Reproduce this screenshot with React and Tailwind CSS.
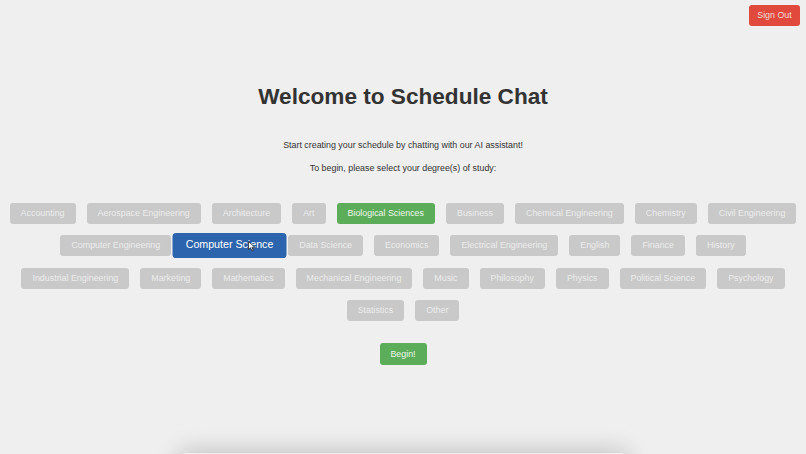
import { useState } from "react";

const rows = [
  ["Accounting", "Aerospace Engineering", "Architecture", "Art", "Biological Sciences", "Business", "Chemical Engineering", "Chemistry", "Civil Engineering"],
  ["Computer Engineering", "Computer Science", "Data Science", "Economics", "Electrical Engineering", "English", "Finance", "History"],
  ["Industrial Engineering", "Marketing", "Mathematics", "Mechanical Engineering", "Music", "Philosophy", "Physics", "Political Science", "Psychology"],
  ["Statistics", "Other"],
];

export default function App() {
  const [selected, setSelected] = useState(["Biological Sciences"]);
  const hovered = "Computer Science";

  const toggle = (d) => {
    setSelected((s) => (s.includes(d) ? s.filter((x) => x !== d) : [...s, d]));
  };

  return (
    <div
      className="relative min-h-screen overflow-hidden bg-[#efefef] text-[#333]"
      style={{ fontFamily: '"Liberation Sans", Arial, sans-serif' }}
    >
      {/* Header */}
      <div className="flex justify-end pt-[5px] pr-[6px]">
        <button className="flex h-[21px] w-[51px] items-center justify-center rounded-[3px] bg-[#e0493b] text-[8.9px] leading-none text-[#f3dcd9]">
          Sign Out
        </button>
      </div>

      <div className="flex flex-col items-center">
        <h1 className="mt-[59.5px] text-[22.6px] font-bold leading-none text-[#333]">
          Welcome to Schedule Chat
        </h1>
        <p className="mt-[32.5px] text-[8.9px] leading-[9px] text-[#333]">
          Start creating your schedule by chatting with our AI assistant!
        </p>
        <p className="mt-[14px] text-[8.9px] leading-[9px] text-[#333]">
          To begin, please select your degree(s) of study:
        </p>

        {/* Degrees */}
        <div className="mt-[30.5px] flex flex-col items-center gap-[11.3px]">
          {rows.map((row, i) => (
            <div key={i} className="flex justify-center gap-[11px]">
              {row.map((d) => {
                const isSel = selected.includes(d);
                const isHover = d === hovered;
                return (
                  <button
                    key={d}
                    onClick={() => toggle(d)}
                    className={
                      "flex h-[21px] items-center justify-center whitespace-nowrap rounded-[3px] px-[11px] text-[8.9px] leading-none " +
                      (isHover
                        ? "relative z-10 scale-[1.2] bg-[#2c64ad] text-white"
                        : isSel
                        ? "bg-[#5cad5a] text-[#eef6ec]"
                        : "bg-[#c9c9c9] text-[#ececec]")
                    }
                  >
                    {d}
                  </button>
                );
              })}
            </div>
          ))}
        </div>

        <button className="mt-[22.3px] flex h-[22px] w-[47px] items-center justify-center rounded-[3px] bg-[#5cad5a] text-[8.9px] leading-none text-[#eef6ec]">
          Begin!
        </button>

        {/* Chat box (below fold) */}
        <div className="mt-[88px] h-[200px] w-[450px] rounded-[8px] bg-[#efefef] shadow-[0_-2px_24px_rgba(0,0,0,0.2)]" />
      </div>

      {/* Mouse cursor */}
      <svg
        className="pointer-events-none absolute left-[248px] top-[241px] z-20"
        width="8"
        height="11"
        viewBox="0 0 8 11"
      >
        <path d="M0.5 0.5 L0.5 8.5 L2.5 6.8 L4 10 L5.3 9.4 L3.9 6.3 L6.8 6.3 Z" fill="#fff" stroke="#222" strokeWidth="0.8" strokeLinejoin="round" />
      </svg>
    </div>
  );
}
